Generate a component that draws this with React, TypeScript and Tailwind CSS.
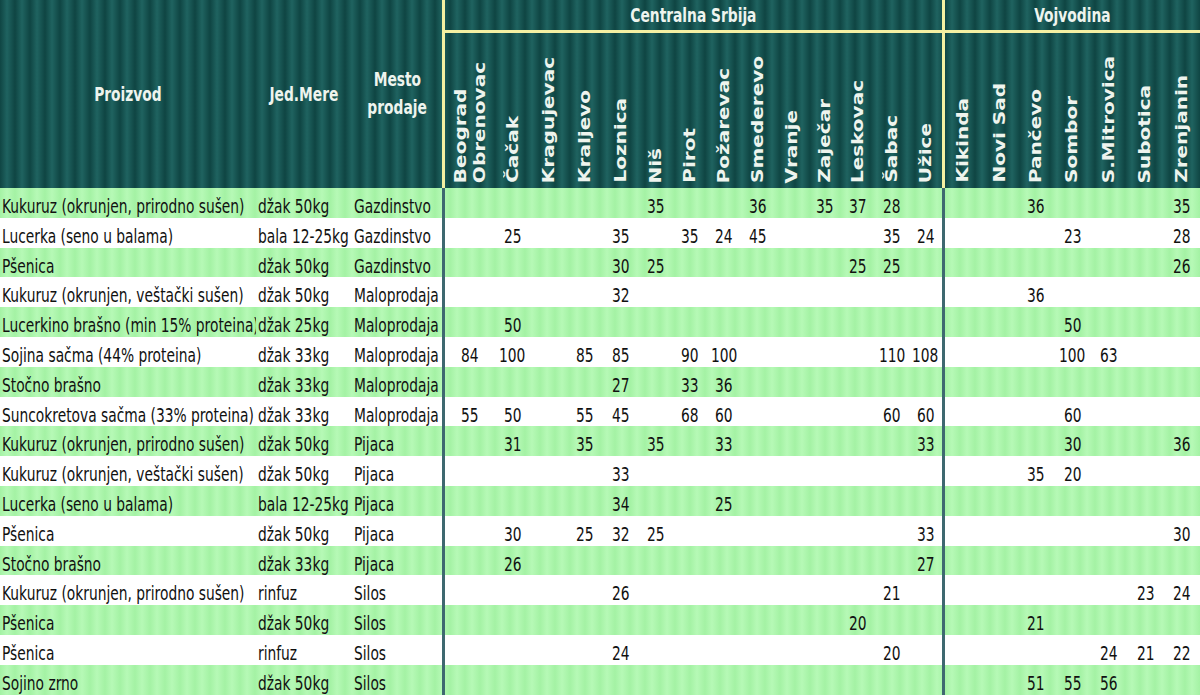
import React from "react";

type Row = [string, string, string, Record<number, string>, Record<number, string>];

const central = [
  "Beograd\nObrenovac",
  "Čačak",
  "Kragujevac",
  "Kraljevo",
  "Loznica",
  "Niš",
  "Pirot",
  "Požarevac",
  "Smederevo",
  "Vranje",
  "Zaječar",
  "Leskovac",
  "Šabac",
  "Užice",
];

const vojvodina = ["Kikinda", "Novi Sad", "Pančevo", "Sombor", "S.Mitrovica", "Subotica", "Zrenjanin"];

const rows: Row[] = [
  ["Kukuruz (okrunjen, prirodno sušen)", "džak 50kg", "Gazdinstvo", { 5: "35", 8: "36", 10: "35", 11: "37", 12: "28" }, { 2: "36", 6: "35" }],
  ["Lucerka (seno u balama)", "bala 12-25kg", "Gazdinstvo", { 1: "25", 4: "35", 6: "35", 7: "24", 8: "45", 12: "35", 13: "24" }, { 3: "23", 6: "28" }],
  ["Pšenica", "džak 50kg", "Gazdinstvo", { 4: "30", 5: "25", 11: "25", 12: "25" }, { 6: "26" }],
  ["Kukuruz (okrunjen, veštački sušen)", "džak 50kg", "Maloprodaja", { 4: "32" }, { 2: "36" }],
  ["Lucerkino brašno (min 15% proteina)", "džak 25kg", "Maloprodaja", { 1: "50" }, { 3: "50" }],
  ["Sojina sačma (44% proteina)", "džak 33kg", "Maloprodaja", { 0: "84", 1: "100", 3: "85", 4: "85", 6: "90", 7: "100", 12: "110", 13: "108" }, { 3: "100", 4: "63" }],
  ["Stočno brašno", "džak 33kg", "Maloprodaja", { 4: "27", 6: "33", 7: "36" }, {}],
  ["Suncokretova sačma (33% proteina)", "džak 33kg", "Maloprodaja", { 0: "55", 1: "50", 3: "55", 4: "45", 6: "68", 7: "60", 12: "60", 13: "60" }, { 3: "60" }],
  ["Kukuruz (okrunjen, prirodno sušen)", "džak 50kg", "Pijaca", { 1: "31", 3: "35", 5: "35", 7: "33", 13: "33" }, { 3: "30", 6: "36" }],
  ["Kukuruz (okrunjen, veštački sušen)", "džak 50kg", "Pijaca", { 4: "33" }, { 2: "35", 3: "20" }],
  ["Lucerka (seno u balama)", "bala 12-25kg", "Pijaca", { 4: "34", 7: "25" }, {}],
  ["Pšenica", "džak 50kg", "Pijaca", { 1: "30", 3: "25", 4: "32", 5: "25", 13: "33" }, { 6: "30" }],
  ["Stočno brašno", "džak 33kg", "Pijaca", { 1: "26", 13: "27" }, {}],
  ["Kukuruz (okrunjen, prirodno sušen)", "rinfuz", "Silos", { 4: "26", 12: "21" }, { 5: "23", 6: "24" }],
  ["Pšenica", "džak 50kg", "Silos", { 11: "20" }, { 2: "21" }],
  ["Pšenica", "rinfuz", "Silos", { 4: "24", 12: "20" }, { 4: "24", 5: "21", 6: "22" }],
  ["Sojino zrno", "džak 50kg", "Silos", {}, { 2: "51", 3: "55", 4: "56" }],
];

const headBg =
  "bg-[repeating-linear-gradient(90deg,#0f4543_0px,#1f6360_7px,#0f4543_15px)]";
const greenBg =
  "bg-[repeating-linear-gradient(90deg,#a4f2a4_0px,#b6f9b6_7px,#a4f2a4_15px)]";

const centralCols =
  "grid grid-cols-[49px_37px_35px_37px_36px_34px_34px_34px_34px_33px_33px_34px_34px_33px]";

function HText({ children }: { children: React.ReactNode }) {
  return (
    <span className="inline-block whitespace-nowrap scale-x-[0.69] font-bold text-[20px] leading-[28px] text-[#eef4ee]">
      {children}
    </span>
  );
}

function VLabel({ text }: { text: string }) {
  const parts = text.split("\n");
  return (
    <div className="flex items-end justify-center pb-[5px] min-w-0">
      <span className="[writing-mode:vertical-rl] rotate-180 scale-x-[0.78] font-bold text-[20px] leading-[24px] whitespace-nowrap text-[#eef4ee]">
        {parts.map((p, i) => (
          <React.Fragment key={i}>
            {i > 0 && <br />}
            {p}
          </React.Fragment>
        ))}
      </span>
    </div>
  );
}

function Num({ v }: { v?: string }) {
  return (
    <div className="flex justify-center overflow-visible pt-[6px] leading-[24px] min-w-0">
      {v ? <span className="inline-block whitespace-nowrap scale-x-[0.69]">{v}</span> : null}
    </div>
  );
}

function LText({ v }: { v: string }) {
  return (
    <div className="overflow-hidden pl-[2px] pt-[6px] leading-[24px]">
      <span className="inline-block whitespace-nowrap origin-left scale-x-[0.69]">{v}</span>
    </div>
  );
}

export default function App() {
  return (
    <div
      className="w-[1200px] h-[700px] bg-white overflow-hidden text-[20px] text-[#111]"
      style={{ fontFamily: "'DejaVu Sans', Verdana, sans-serif" }}
    >
      {/* Header */}
      <div className={`flex h-[188px] ${headBg}`}>
        <div className="grid grid-cols-[256px_96px_90px] w-[442px]">
          <div className="flex items-center justify-center">
            <HText>Proizvod</HText>
          </div>
          <div className="flex items-center justify-center">
            <HText>Jed.Mere</HText>
          </div>
          <div className="flex flex-col items-center justify-center pb-[2px]">
            <HText>Mesto</HText>
            <HText>prodaje</HText>
          </div>
        </div>
        <div className="w-[3px] bg-[#f4f0a2]" />
        <div className="flex flex-col w-[755px]">
          <div className="flex h-[30px]">
            <div className="w-[497px] flex items-center justify-center">
              <HText>Centralna Srbija</HText>
            </div>
            <div className="w-[3px] bg-[#f4f0a2]" />
            <div className="flex-1 flex items-center justify-center">
              <HText>Vojvodina</HText>
            </div>
          </div>
          <div className="h-[3px] bg-[#f4f0a2]" />
          <div className="flex flex-1">
            <div className={`w-[497px] ${centralCols}`}>
              {central.map((c) => (
                <VLabel key={c} text={c} />
              ))}
            </div>
            <div className="w-[3px] bg-[#f4f0a2]" />
            <div className="flex-1 grid grid-cols-7">
              {vojvodina.map((c) => (
                <VLabel key={c} text={c} />
              ))}
            </div>
          </div>
        </div>
      </div>

      {/* Body */}
      <div className="flex flex-col">
        {rows.map((r, i) => {
          const bg = i % 2 === 0 ? greenBg : "bg-white";
          return (
            <div key={i} className={`flex h-[29.8px] ${bg}`}>
              <div className="grid grid-cols-[256px_96px_90px] w-[442px]">
                <LText v={r[0]} />
                <LText v={r[1]} />
                <LText v={r[2]} />
              </div>
              <div className="w-[3px] bg-[#3e6870]" />
              <div className={`w-[497px] ${centralCols}`}>
                {central.map((_, k) => (
                  <Num key={k} v={r[3][k]} />
                ))}
              </div>
              <div className="w-[3px] bg-[#3e6870]" />
              <div className="flex-1 grid grid-cols-7">
                {vojvodina.map((_, k) => (
                  <Num key={k} v={r[4][k]} />
                ))}
              </div>
            </div>
          );
        })}
      </div>
    </div>
  );
}
